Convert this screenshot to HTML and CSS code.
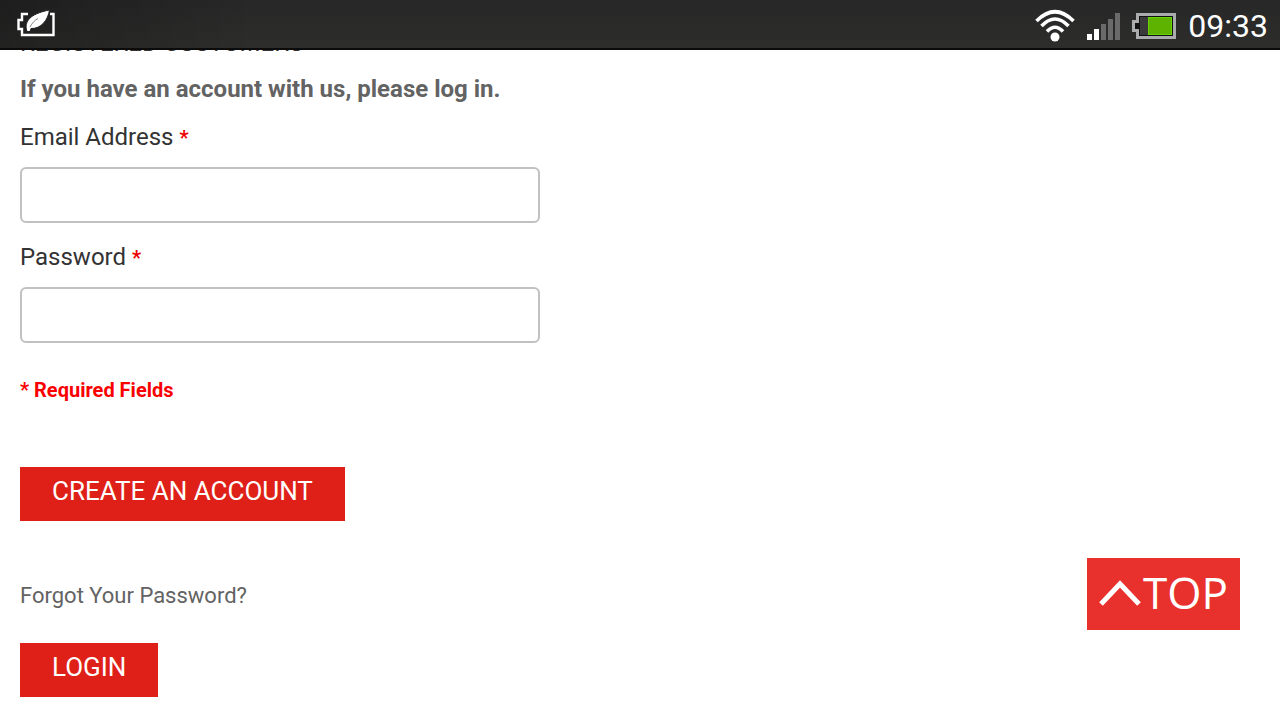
FILE: index.html
```html
<!DOCTYPE html>
<html lang="en">
  <head>
    <meta charset="UTF-8" />
    <meta name="viewport" content="width=device-width, initial-scale=1.0" />
    <title>Customer Login</title>
    <link rel="stylesheet" href="styles.css">
  </head>
  <body>
    <header class="status-bar">
      <svg class="icon-saver" width="38" height="28" viewBox="0 0 38 28">
        <path d="M11 4H5v6H1.500v9H5v6H36.500V4H33" fill="none" stroke="#fff" stroke-width="2.400" />
        <path d="M9.500 20C7 9 17 3 32.500 0C31 10 24 19 14 18.500L13 21.500H10Z" fill="#fff" stroke="#222" stroke-width="1" />
        <path d="M13 17C15 13 18 10 21 8.500" fill="none" stroke="#888" stroke-width="1" />
      </svg>
      <div class="status-icons">
        <svg class="icon-wifi" width="40" height="34" viewBox="0 0 40 34">
          <g fill="none" stroke="#fff" stroke-width="3.600">
            <path d="M1.500 12Q20 -6.500 38.500 12" />
            <path d="M6.500 17Q20 3 33.500 17" />
            <path d="M12 22.500Q20 14 28 22.500" />
          </g>
          <circle cx="20" cy="28" r="4.500" fill="#fff" />
        </svg>
        <svg class="icon-signal" width="33" height="28" viewBox="0 0 33 28">
          <path d="M0 22h5v6H0zM7 17h5v11H7z" fill="#fff" />
          <path d="M14 12h5v16h-5zM21 7h5v21h-5zM28 1h5v27h-5z" fill="#6a6a6a" />
        </svg>
        <svg class="icon-battery" width="44" height="26" viewBox="0 0 44 26">
          <path d="M4 0H44V26H4V19H0V7H4Z" fill="#a9abac" />
          <path d="M7 3H41V23H7V16H3V10H7Z" fill="#111" />
          <path d="M8 4h8v18H8z" fill="#3a3a3a" />
          <path d="M16 4h24v18H16z" fill="#66d400" />
          <path d="M17 5h22v16H17z" fill="#5db300" />
        </svg>
        <span class="clock">09:33</span>
      </div>
    </header>

    <form class="login">
      <h2>Registered Customers</h2>
      <p class="intro">If you have an account with us, please log in.</p>
      <label for="email">Email Address <em>*</em></label>
      <input type="email" name="email" id="email" />
      <label for="password">Password <em>*</em></label>
      <input type="password" name="password" id="password" />
      <p class="required">* Required Fields</p>
      <button type="button" class="btn">Create an Account</button>
      <a class="forgot" href="#">Forgot Your Password?</a>
      <button type="submit" class="btn">Login</button>
    </form>

    <a class="to-top" href="#">
      <svg width="44" height="28" viewBox="0 0 44 28">
        <path d="M2 26L21 6L40 26" fill="none" stroke="#fff" stroke-width="5" />
      </svg>
      <span>TOP</span>
    </a>
  </body>
</html>
```
FILE: styles.css
```css
body {
  margin: 0;
  background: white;
  color: #333;
  font-family: Roboto, sans-serif;
  font-size: 24px;
  line-height: 28px;
}
.status-bar {
  position: fixed;
  top: 0;
  left: 0;
  right: 0;
  z-index: 2;
  display: flex;
  justify-content: space-between;
  align-items: center;
  height: 50px;
  box-sizing: border-box;
  padding: 0 12px 0 17px;
  background: linear-gradient(to right, rgba(0, 0, 0, 0.25), transparent 20%),
    linear-gradient(#272727, #2d2d2c);
  border-bottom: 2px solid #0b0b0b;
}
.status-icons {
  display: flex;
  align-items: center;
  gap: 12px;
  padding-top: 3px;
}
.clock {
  color: white;
  font-size: 32px;
  line-height: 48px;
}
.login {
  display: flex;
  flex-direction: column;
  align-items: flex-start;
  padding: 29px 20px 23px;
}
h2 {
  margin: 0 0 18px;
  font-size: 24px;
  font-weight: normal;
  text-transform: uppercase;
}
.intro {
  margin: 0 0 20px;
  color: #636363;
  font-weight: bold;
}
label {
  margin-bottom: 16px;
}
label em {
  color: #e00;
  font-style: normal;
  font-weight: bold;
  font-size: 20px;
  line-height: 20px;
}
.login input {
  width: 520px;
  max-width: 100%;
  height: 56px;
  box-sizing: border-box;
  margin: 0 0 20px;
  padding: 0 12px;
  border: 2px solid #c1c1c1;
  border-radius: 6px;
  background: white;
  font: inherit;
}
.required {
  margin: 13px 0 63px;
  color: #fa0000;
  font-size: 20px;
  font-weight: bold;
}
.btn {
  height: 54px;
  padding: 0 32px 6px;
  border: none;
  background: #df2018;
  color: white;
  font-family: inherit;
  font-size: 26px;
  text-transform: uppercase;
  cursor: pointer;
}
.forgot {
  margin: 61px 0 33px;
  color: #636363;
  font-size: 22px;
  text-decoration: none;
}
.to-top {
  position: fixed;
  right: 40px;
  bottom: 90px;
  display: flex;
  align-items: center;
  height: 72px;
  box-sizing: border-box;
  padding: 0 12px 4px;
  background: #e8312c;
  color: white;
  font-family: "Open Sans", sans-serif;
  font-size: 44px;
  font-weight: 500;
  line-height: 68px;
  text-decoration: none;
}
```
